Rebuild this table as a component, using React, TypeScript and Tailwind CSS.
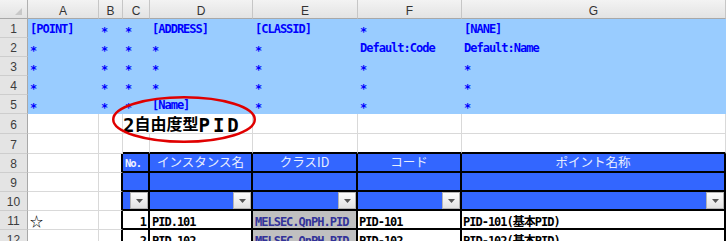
import React from "react";

const MONO = "font-['DejaVu_Sans_Mono','Noto_Sans_CJK_JP',monospace]";
const COLS = ["w-[71px]", "w-[24px]", "w-[27px]", "w-[103px]", "w-[105px]", "w-[104px]", "w-[264px]"];
const TCOLS = ["w-[27px]", "w-[103px]", "w-[105px]", "w-[104px]", "w-[264px]"];
const LETTERS = ["A", "B", "C", "D", "E", "F", "G"];

const BLUE: string[][] = [
  ["[POINT]", "*", "*", "[ADDRESS]", "[CLASSID]", "*", "[NANE]"],
  ["*", "*", "*", "*", "*", "Default:Code", "Default:Name"],
  ["*", "*", "*", "*", "*", "*", "*"],
  ["*", "*", "*", "*", "*", "*", "*"],
  ["*", "*", "*", "[Name]", "*", "*", "*"],
];

const HEADS = ["インスタンス名", "クラスID", "コード", "ポイント名称"];

function RowHead({ n }: { n: number }) {
  return (
    <div className="w-[28px] shrink-0 flex items-center justify-center pt-[2px] bg-[#e4e4e4] border-r border-b border-r-[#a8a8a8] border-b-[#cdcdcd] font-['Liberation_Sans',sans-serif] text-[12px] leading-none text-[#3c3c3c]">
      {n}
    </div>
  );
}

function LeftCells() {
  return (
    <>
      <div className="w-[71px] shrink-0 border-r border-b border-[#d9d9d9]" />
      <div className="w-[24px] shrink-0 border-b border-b-[#d9d9d9] border-r-2 border-r-black" />
    </>
  );
}

function Dropdown() {
  return (
    <div className="w-[18px] h-full shrink-0 flex items-center justify-center bg-linear-to-b from-[#fcfcfc] to-[#e2e2e2] border border-[#b4b4b4]">
      <svg width="7" height="4" viewBox="0 0 7 4">
        <polygon points="0,0 7,0 3.5,4" fill="#555555" />
      </svg>
    </div>
  );
}

function DataRow({ n, no, inst, code, name, star }: { n: number; no: string; inst: string; code: string; name: string; star?: boolean }) {
  const txt = `${MONO} font-bold text-[12px] leading-none tracking-[-1px] text-black`;
  return (
    <div className="flex h-[19px]">
      <RowHead n={n} />
      <div className="w-[71px] shrink-0 border-r border-b border-[#d9d9d9] flex items-center pl-[2px]">
        {star ? <span className="font-['Noto_Sans_CJK_JP',sans-serif] text-[13px] leading-none text-black">☆</span> : null}
      </div>
      <div className="w-[24px] shrink-0 border-b border-b-[#d9d9d9] border-r-2 border-r-black" />
      <div className="w-[27px] shrink-0 border-r-2 border-b-2 border-black bg-white flex items-center justify-end pr-[2px] pt-[4px]">
        <span className={txt}>{no}</span>
      </div>
      <div className="w-[103px] shrink-0 border-r-2 border-b-2 border-black bg-white flex items-center pl-[2px] pt-[4px] whitespace-nowrap">
        <span className={txt}>{inst}</span>
      </div>
      <div className="w-[105px] shrink-0 border-r-2 border-b-2 border-black bg-[#c0c0c0] flex items-center pl-[2px] pt-[4px] whitespace-nowrap overflow-hidden">
        <span className={`${MONO} font-bold text-[12px] leading-none tracking-[-1px] text-[#333399]`}>MELSEC.QnPH.PID</span>
      </div>
      <div className="w-[104px] shrink-0 border-r-2 border-b-2 border-black bg-white flex items-center pl-[1px] pt-[4px] whitespace-nowrap">
        <span className={txt}>{code}</span>
      </div>
      <div className="w-[264px] shrink-0 border-r-2 border-b-2 border-black bg-white flex items-center pl-[1px] pt-[4px] whitespace-nowrap">
        <span className={txt}>{name}</span>
      </div>
    </div>
  );
}

export default function App() {
  return (
    <div className="relative w-[726px] h-[241px] overflow-hidden bg-white">
      {/* column header */}
      <div className="flex h-[19px]">
        <div className="w-[28px] shrink-0 flex items-end justify-end pr-[5px] pb-[3px] bg-linear-to-b from-[#f3f3f3] to-[#e3e3e3] border-r border-b border-r-[#b0b0b0] border-b-[#a8a8a8]">
          <svg width="7" height="7" viewBox="0 0 7 7">
            <polygon points="7,0 7,7 0,7" fill="#c8c8c8" />
          </svg>
        </div>
        {COLS.map((w, i) => (
          <div
            key={i}
            className={`${w} shrink-0 flex items-center justify-center pt-[3px] bg-linear-to-b from-[#f3f3f3] to-[#e3e3e3] border-r border-b border-r-[#c6c6c6] border-b-[#a8a8a8] font-['Liberation_Sans',sans-serif] text-[12px] leading-none text-[#333333]`}
          >
            {LETTERS[i]}
          </div>
        ))}
      </div>

      {/* rows 1-5 blue */}
      {BLUE.map((row, r) => (
        <div key={r} className="flex h-[19px]">
          <RowHead n={r + 1} />
          {row.map((t, i) => (
            <div key={i} className={`${COLS[i]} shrink-0 flex items-center pl-[2px] bg-[#99ccff] whitespace-nowrap`}>
              <span className={`${MONO} font-bold text-[12px] leading-none tracking-[-1px] text-[#0000ff] ${t === "*" ? "mt-[6px]" : ""}`}>{t}</span>
            </div>
          ))}
        </div>
      ))}

      {/* row 6 */}
      <div className="flex h-[20px]">
        <RowHead n={6} />
        <div className="w-[71px] shrink-0 border-r border-b border-[#d9d9d9]" />
        <div className="w-[24px] shrink-0 border-r border-b border-[#d9d9d9]" />
        <div className="w-[27px] shrink-0 border-b border-b-[#d9d9d9] flex items-center pt-[2px] whitespace-nowrap">
          <span className="font-['DejaVu_Sans_Mono',monospace] font-bold text-[19px] leading-none text-black">
            2<span className="font-['Noto_Sans_CJK_JP',sans-serif] text-[16px] align-[2px]">自由度型</span>
            <span className="tracking-[3px]">PID</span>
          </span>
        </div>
        <div className="w-[103px] shrink-0 border-r border-b border-[#d9d9d9]" />
        <div className="w-[105px] shrink-0 border-r border-b border-[#d9d9d9]" />
        <div className="w-[104px] shrink-0 border-r border-b border-[#d9d9d9]" />
        <div className="w-[264px] shrink-0 border-r border-b border-[#d9d9d9]" />
      </div>

      {/* row 7 */}
      <div className="flex h-[20px]">
        <RowHead n={7} />
        <div className="w-[71px] shrink-0 border-r border-b border-[#d9d9d9]" />
        <div className="w-[24px] shrink-0 border-r border-b border-[#d9d9d9]" />
        {TCOLS.map((w, i) => (
          <div key={i} className={`${w} shrink-0 border-r border-r-[#d9d9d9] border-b-2 border-b-black`} />
        ))}
      </div>

      {/* row 8 table header */}
      <div className="flex h-[19px]">
        <RowHead n={8} />
        <LeftCells />
        <div className="w-[27px] shrink-0 bg-[#3366ff] border-r-2 border-b-2 border-black flex items-center pl-[2px] pt-[2px]">
          <span className={`${MONO} font-bold text-[10.5px] leading-none tracking-[-1px] text-[#eef2ff]`}>No.</span>
        </div>
        {HEADS.map((h, i) => (
          <div key={i} className={`${TCOLS[i + 1]} shrink-0 bg-[#3366ff] border-r-2 border-b-2 border-black flex items-center justify-center`}>
            <span className="font-['Noto_Sans_CJK_JP',sans-serif] text-[12.5px] leading-none text-[#e8eeff]">{h}</span>
          </div>
        ))}
      </div>

      {/* row 9 */}
      <div className="flex h-[19px]">
        <RowHead n={9} />
        <LeftCells />
        {TCOLS.map((w, i) => (
          <div key={i} className={`${w} shrink-0 bg-[#3366ff] border-r-2 border-b-2 border-black`} />
        ))}
      </div>

      {/* row 10 filters */}
      <div className="flex h-[19px]">
        <RowHead n={10} />
        <LeftCells />
        {TCOLS.map((w, i) => (
          <div key={i} className={`${w} shrink-0 bg-[#3366ff] border-r-2 border-b-2 border-black flex justify-end`}>
            <Dropdown />
          </div>
        ))}
      </div>

      <DataRow n={11} no="1" inst="PID.101" code="PID-101" name="PID-101(基本PID)" star />
      <DataRow n={12} no="2" inst="PID.102" code="PID-102" name="PID-102(基本PID)" />

      {/* red ellipse annotation */}
      <svg className="absolute left-[112px] top-[95px]" width="146" height="50" viewBox="0 0 146 50">
        <ellipse cx="72" cy="24.5" rx="70.75" ry="22.25" fill="none" stroke="#e00000" strokeWidth="2.5" />
      </svg>
    </div>
  );
}
